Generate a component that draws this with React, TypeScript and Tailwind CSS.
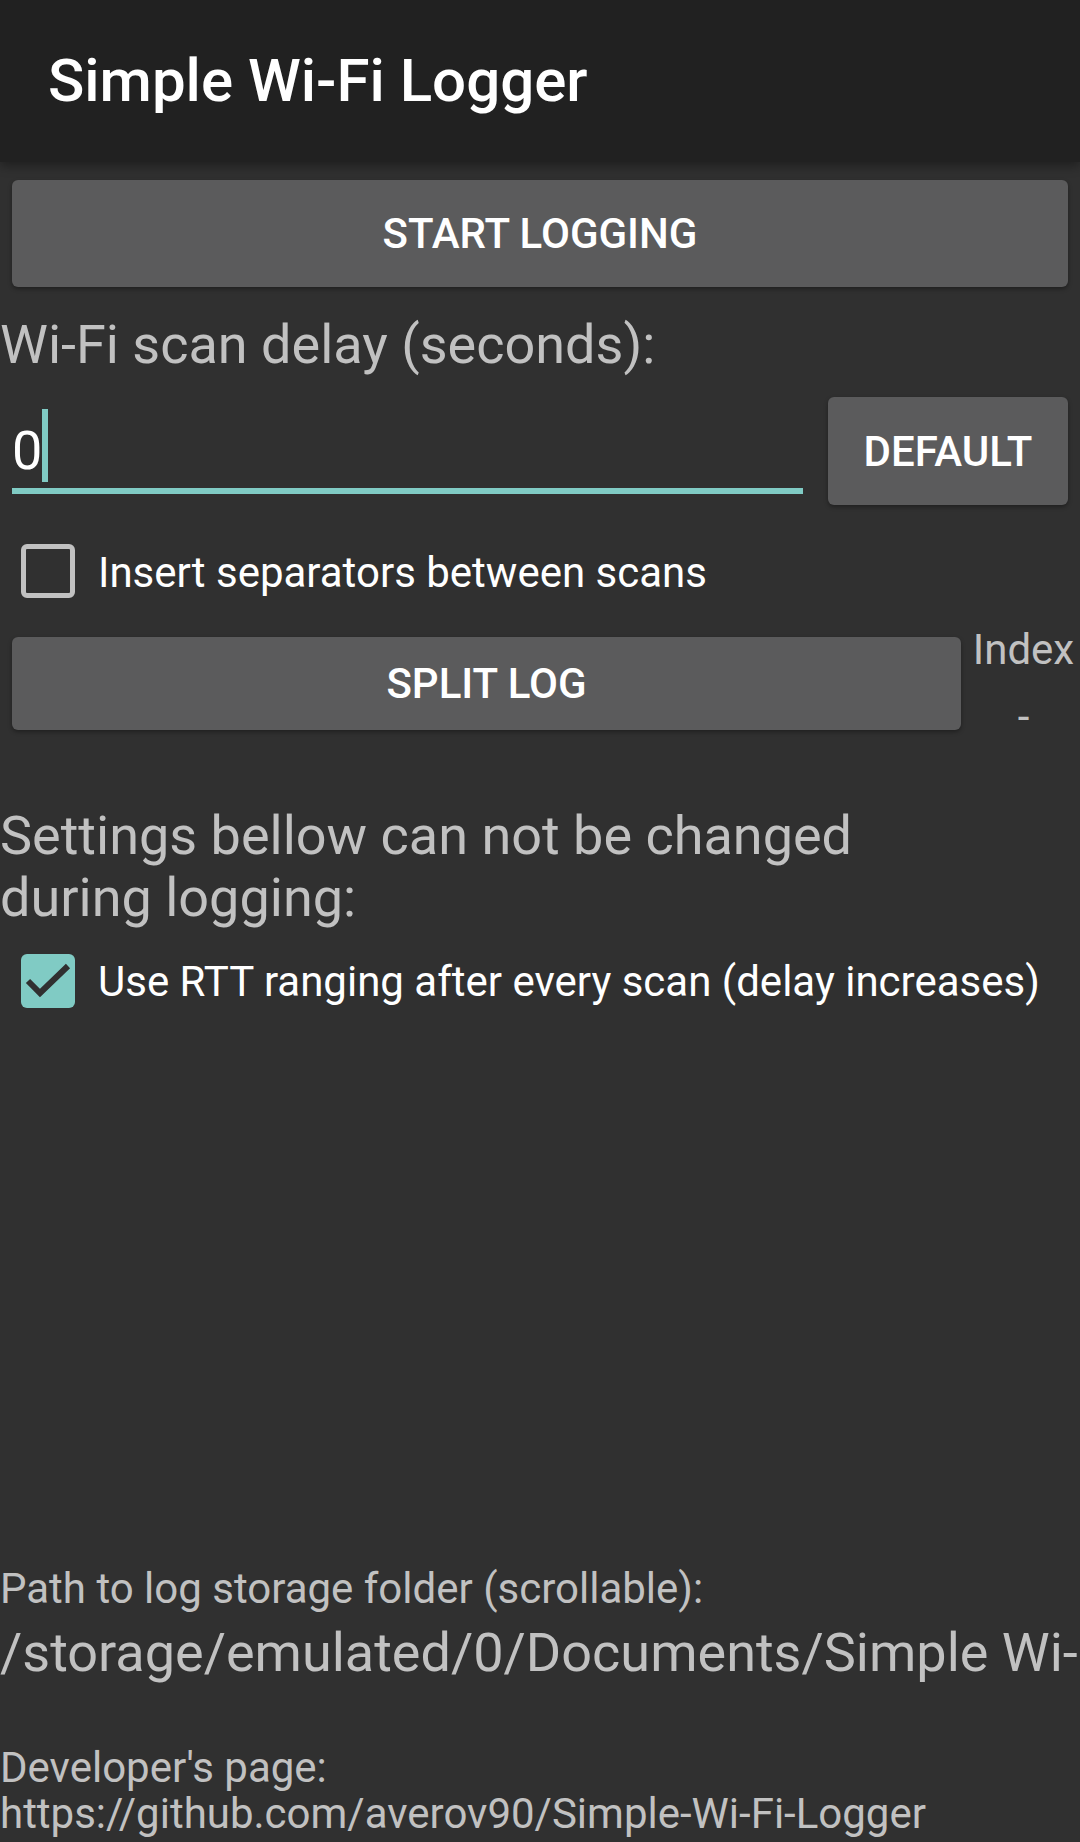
import React from "react";

const Checkbox: React.FC<{ checked?: boolean }> = ({ checked }) => {
  if (checked) {
    return (
      <div className="w-[54px] h-[54px] rounded-[6px] bg-[#80cbc4] shrink-0">
        <svg width="54" height="54" viewBox="0 0 54 54">
          <polyline
            points="7,27 19,39 47,12"
            fill="none"
            stroke="#303030"
            strokeWidth="6"
            strokeLinejoin="miter"
          />
        </svg>
      </div>
    );
  }
  return <div className="w-[54px] h-[54px] rounded-[6px] border-[5px] border-[#c1c1c1] shrink-0" />;
};

const App: React.FC = () => {
  return (
    <div className="w-[1080px] min-h-[1842px] bg-[#303030] font-[Roboto,sans-serif] overflow-hidden">
      <div className="relative z-10 h-[162px] bg-[#212121] flex items-center pl-[48px] shadow-[0_4px_10px_rgba(0,0,0,0.35)]">
        <h1 className="text-[60px] leading-none font-medium text-white">Simple Wi-Fi Logger</h1>
      </div>

      <button className="mx-[12px] mt-[18px] w-[1056px] h-[107px] rounded-[6px] bg-[#5b5b5c] flex items-center justify-center text-[42px] font-medium text-white shadow-[0_2px_4px_rgba(0,0,0,0.35)]">
        START LOGGING
      </button>

      <div className="mt-[26px] text-[54px] leading-[63px] text-[#c1c1c1]">Wi-Fi scan delay (seconds):</div>

      <div className="mt-[21px] flex px-[12px]">
        <div className="w-[791px] pt-[12px]">
          <div className="h-[73px] flex items-end">
            <span className="text-[54px] leading-[63px] text-white">0</span>
            <span className="w-[6px] h-[73px] bg-[#80cbc4]" />
          </div>
          <div className="mt-[6px] h-[6px] bg-[#80cbc4]" />
        </div>
        <button className="ml-[25px] w-[240px] h-[108px] rounded-[6px] bg-[#5b5b5c] flex items-center justify-center text-[42px] font-medium text-white shadow-[0_2px_4px_rgba(0,0,0,0.35)]">
          DEFAULT
        </button>
      </div>

      <div className="mt-[39px] h-[54px] flex items-center pl-[21px]">
        <Checkbox />
        <span className="ml-[23px] text-[42px] leading-[49px] text-white pt-[2px]">Insert separators between scans</span>
      </div>

      <div className="mt-[27px] flex items-start">
        <button className="ml-[12px] mt-[12px] w-[949px] h-[93px] rounded-[6px] bg-[#5b5b5c] flex items-center justify-center text-[42px] font-medium text-white shadow-[0_2px_4px_rgba(0,0,0,0.35)]">
          SPLIT LOG
        </button>
        <div className="ml-[6px] flex-1 flex flex-col items-center text-[42px] leading-[49px] text-[#c1c1c1]">
          <span>Index</span>
          <span className="mt-[18px]">-</span>
        </div>
      </div>

      <div className="mt-[64px] text-[54px] leading-[62px] text-[#c1c1c1]">
        Settings bellow can not be changed
        <br />
        during logging:
      </div>

      <div className="mt-[25px] h-[54px] flex items-center pl-[21px]">
        <Checkbox checked />
        <span className="ml-[23px] text-[42px] leading-[49px] text-white">Use RTT ranging after every scan (delay increases)</span>
      </div>

      <div className="mt-[556px] text-[42px] leading-[49px] text-[#c1c1c1]">Path to log storage folder (scrollable):</div>
      <div className="mt-[8px] text-[54px] leading-[63px] text-[#c1c1c1] whitespace-nowrap overflow-hidden">
        /storage/emulated/0/Documents/Simple Wi-Fi Logger
      </div>

      <div className="mt-[61px] text-[42px] leading-[46px] text-[#c1c1c1]">
        Developer's page:
        <br />
        https://github.com/averov90/Simple-Wi-Fi-Logger
      </div>
    </div>
  );
};

export default App;
